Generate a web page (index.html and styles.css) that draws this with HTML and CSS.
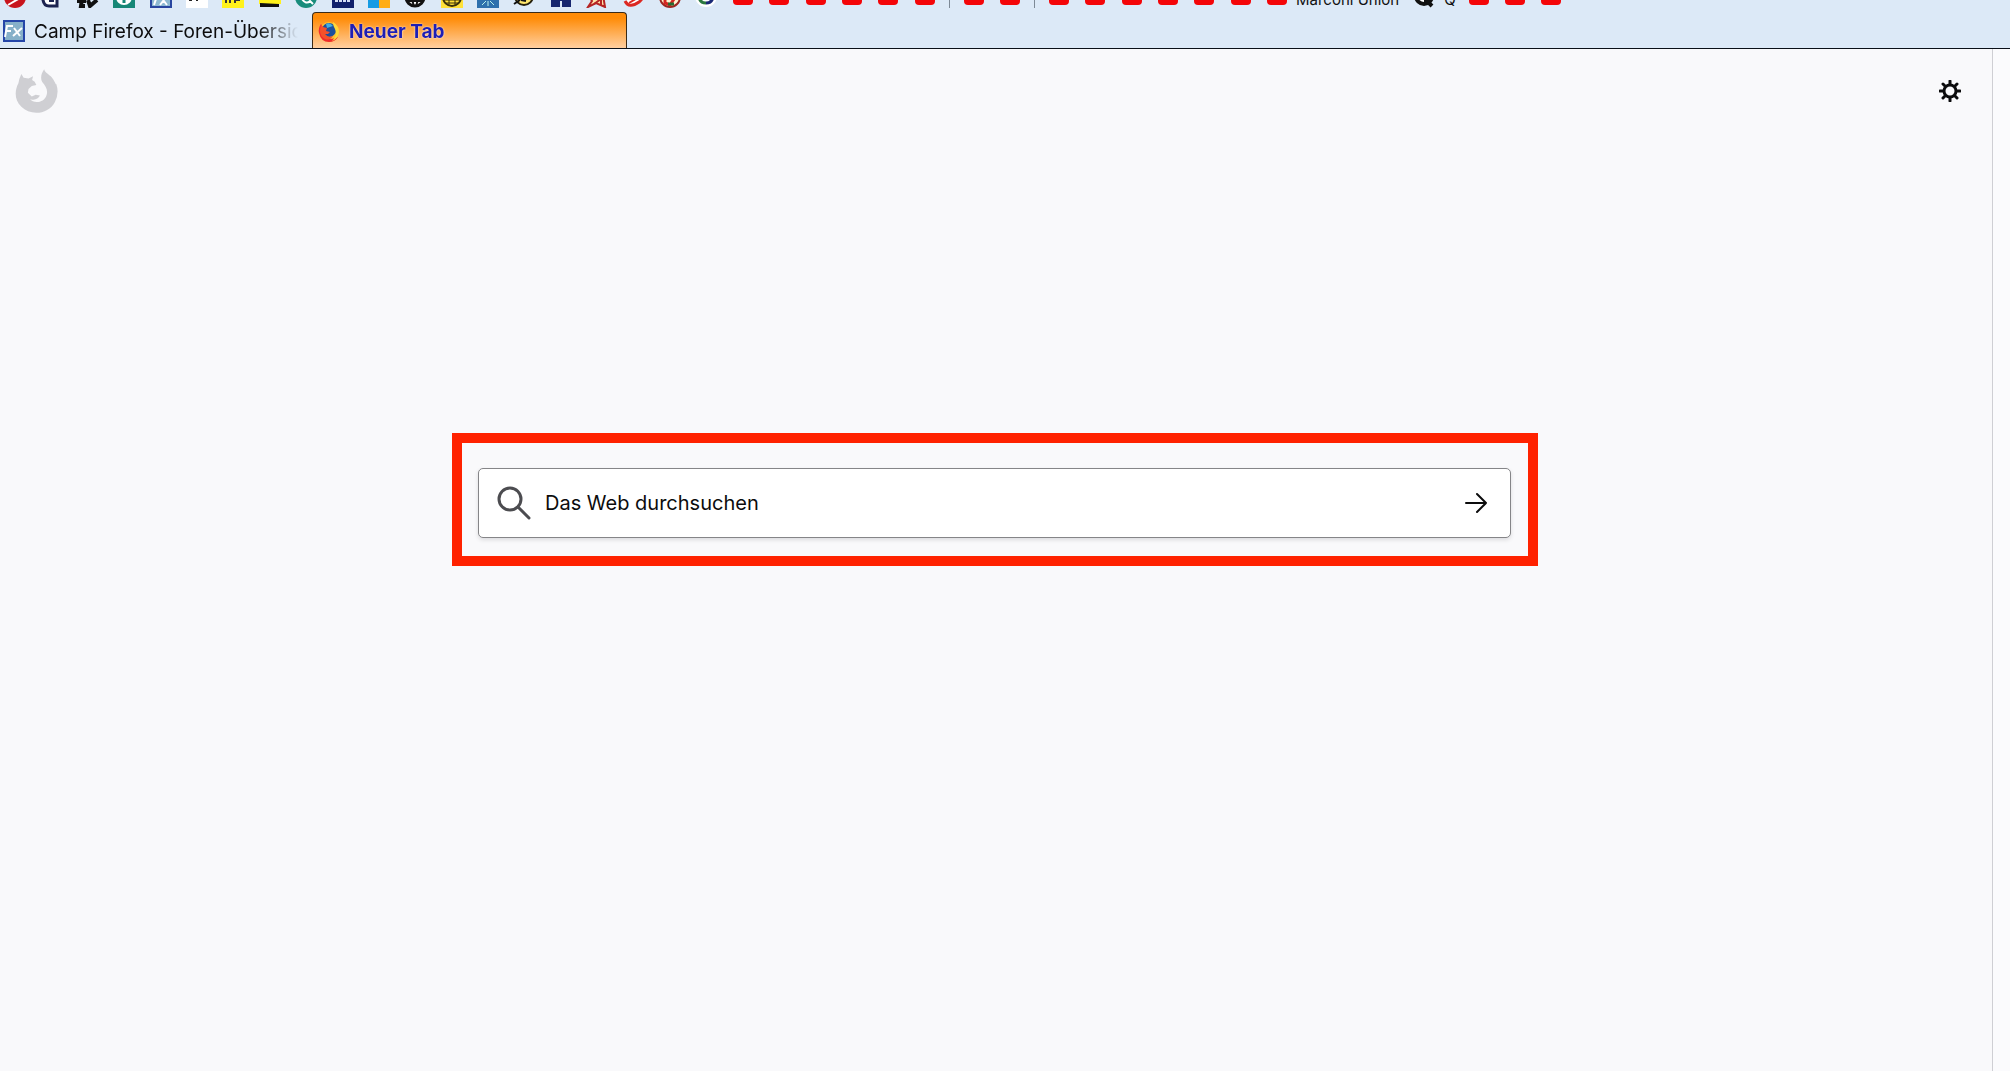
FILE: index.html
```
<!DOCTYPE html>
<html lang="de">

<head>
    <meta charset="utf-8">
    <title>Neuer Tab</title>
    <link rel="stylesheet" href="styles.css">
</head>

<body>
    <nav class="bookmarks" aria-label="Lesezeichen">
        <div class="group icons">
            <svg viewBox="0 0 22 22"><circle cx="11" cy="11" r="11" fill="#c8141c" /><path d="M4 19L16 12" stroke="#fff" stroke-width="2" /></svg>
            <svg viewBox="0 0 22 22"><path d="M3 8v6q1 6 6 6h8V8" fill="#fff" stroke="#1c2350" stroke-width="3" /><path d="M9 15h5" stroke="#1c2350" stroke-width="2" /></svg>
            <svg viewBox="0 0 22 22"><path d="M0 15h9M5 12l-1 8h4M11 14l2 6 7-6" fill="none" stroke="#111" stroke-width="4" /></svg>
            <svg viewBox="0 0 22 22"><path d="M0 0h22v22H0z" fill="#168777" /><circle cx="11" cy="11" r="8" fill="#fff" /><path d="M11 10v7" stroke="#168777" stroke-width="3" /></svg>
            <svg viewBox="0 0 22 22"><path d="M1 1h20v20H1z" fill="#8db9d2" stroke="#2846a0" stroke-width="2" /><path d="M4 19l3-9M10 10l7 9M17 10l-7 9" stroke="#fff" stroke-width="2" /></svg>
            <svg viewBox="0 0 22 22"><path d="M0 0h22v22H0z" fill="#fff" /><path d="M3 14h3M10 14h2" stroke="#222" stroke-width="2" /></svg>
            <svg viewBox="0 0 22 22"><path d="M0 0h22v22H0z" fill="#fff21c" /><path d="M4 10v7M8 10v7M13 10v7M13 14h5" stroke="#333" stroke-width="2" /></svg>
            <svg viewBox="0 0 22 22"><path d="M0 0h22v18H0z" fill="#fff21c" /><path d="M1 17l19 1v3H1z" fill="#111" /></svg>
            <svg viewBox="0 0 22 22"><circle cx="11" cy="11" r="11" fill="#188c7c" /><path d="M7 13q4 6 8 2l3 3" fill="none" stroke="#fff" stroke-width="2" /></svg>
            <svg viewBox="0 0 22 22"><path d="M0 0h22v22H0z" fill="#10206c" /><path d="M3 15h16" stroke="#d5def4" stroke-width="2" stroke-dasharray="3 1" /></svg>
            <svg viewBox="0 0 22 22"><path d="M0 0h11v22H0z" fill="#169be3" /><path d="M11 0h11v22H11z" fill="#ffad16" /></svg>
            <svg viewBox="0 0 22 22"><circle cx="11" cy="11" r="9" fill="#fff" stroke="#111" stroke-width="3" /><path d="M2 15h18M8 4q-1 8 2 16M14 4q1 8-2 16" fill="none" stroke="#111" stroke-width="2" /></svg>
            <svg viewBox="0 0 22 22"><path d="M0 0h22v22H0z" fill="#ffe139" /><circle cx="11" cy="11" r="9" fill="none" stroke="#39310b" stroke-width="2" /><path d="M3 14h16M5 17h12M8 8v12M14 8v12" stroke="#39310b" stroke-width="1" /></svg>
            <svg viewBox="0 0 22 22"><path d="M0 0h22v22H0z" fill="#2e70ad" /><path d="M11 15v5M9 15l-4 4M13 15l4 4" stroke="#b8f1eb" stroke-width="1" /></svg>
            <svg viewBox="0 0 22 22"><circle cx="11" cy="10" r="9" fill="#ffe66c" stroke="#25200c" stroke-width="2" /><path d="M1 18l6-4M8 14l5 1" stroke="#111" stroke-width="2" /></svg>
            <svg viewBox="0 0 22 22"><path d="M1 0h20v21H1z" fill="#17276f" /><path d="M11 15v7" stroke="#dce9f7" stroke-width="2" /></svg>
            <svg viewBox="0 0 22 22"><path d="M1 7l5 8-4 6 8-4 9 4-2-12" fill="#ffe3a8" stroke="#b52424" stroke-width="2" /><path d="M8 18l7-5v7" fill="none" stroke="#b52424" stroke-width="2" /></svg>
            <svg viewBox="0 0 22 22"><path d="M2 15q4 8 14 1 5-4 4-9" fill="#fff" stroke="#dc2822" stroke-width="3" /><path d="M6 17l10-6" stroke="#dc2822" stroke-width="2" /></svg>
            <svg viewBox="0 0 22 22"><circle cx="11" cy="11" r="10" fill="#fff2ce" stroke="#9b2720" stroke-width="2" /><path d="M6 10v7l5 2 4-6" fill="none" stroke="#d52620" stroke-width="3" /><path d="M9 18h6" stroke="#286c31" stroke-width="3" /></svg>
            <svg viewBox="0 0 22 22"><circle cx="11" cy="10" r="11" fill="#fff" /><path d="M4 11q1 6 7 6" fill="none" stroke="#2a7840" stroke-width="3" /><path d="M11 17q6 0 7-6" fill="none" stroke="#192875" stroke-width="3" /></svg>
            <svg viewBox="0 0 22 22"><use href="#video" /></svg>
            <svg viewBox="0 0 22 22"><use href="#video" /></svg>
            <svg viewBox="0 0 22 22"><use href="#video" /></svg>
            <svg viewBox="0 0 22 22"><use href="#video" /></svg>
            <svg viewBox="0 0 22 22"><use href="#video" /></svg>
            <svg viewBox="0 0 22 22"><use href="#video" /></svg>
        </div>
        <span class="separator"></span>
        <div class="group pair">
            <svg viewBox="0 0 22 22"><use href="#video" /></svg>
            <svg viewBox="0 0 22 22"><use href="#video" /></svg>
        </div>
        <span class="separator"></span>
        <div class="group videos">
            <svg viewBox="0 0 22 22"><use href="#video" /></svg>
            <svg viewBox="0 0 22 22"><use href="#video" /></svg>
            <svg viewBox="0 0 22 22"><use href="#video" /></svg>
            <svg viewBox="0 0 22 22"><use href="#video" /></svg>
            <svg viewBox="0 0 22 22"><use href="#video" /></svg>
            <svg viewBox="0 0 22 22"><use href="#video" /></svg>
            <svg viewBox="0 0 22 22"><use href="#video" /></svg>
        </div>
        <a class="bookmark" href="#">Marconi Union</a>
        <a class="bookmark q-link" href="#">
            <svg viewBox="0 0 22 22"><circle cx="11" cy="10" r="8" fill="#fff" stroke="#111" stroke-width="4" /><path d="M11 14h5M14 15l5 5" stroke="#111" stroke-width="4" /></svg>
            Q
        </a>
        <div class="group last">
            <svg viewBox="0 0 22 22"><use href="#video" /></svg>
            <svg viewBox="0 0 22 22"><use href="#video" /></svg>
            <svg viewBox="0 0 22 22"><use href="#video" /></svg>
        </div>
    </nav>

    <div class="tabs" role="tablist">
        <button class="tab" type="button" role="tab" aria-selected="false">
            <svg class="favicon" viewBox="0 0 22 22">
                <path d="M1 1h20v20H1z" fill="#86b0c9" stroke="#2445a8" stroke-width="2" />
                <path d="M2 17L4 6h6M3 11h5M11 8l6 8M19 8l-9 8" fill="none" stroke="#fff" stroke-width="2" />
            </svg>
            <span class="label">Camp Firefox - Foren-Übersicht</span>
        </button>
        <button class="tab active" type="button" role="tab" aria-selected="true">
            <svg class="favicon" viewBox="0 0 22 22">
                <circle cx="11" cy="11" r="10" fill="#ffc02e" />
                <path d="M3 3Q0 7 1 12q2 9 10 9 6 0 9-5-4 2-8 2L6 8z" fill="#f02a2c" />
                <circle cx="11" cy="9" r="7" fill="#1d4f9c" />
                <path d="M8 3q4-2 7 2l-3 1-3 1z" fill="#43aee0" />
                <path d="M3 3l2 3 4 1-1 3 4 1-2 2-3 0q3 4 8 2-3 5-8 3-5-3-5-8z" fill="#f4512a" />
                <path d="M15 1q6 4 6 10-1 7-7 9 6-6 3-12-2-3-2-7" fill="#ffd83a" />
            </svg>
            <span class="label">Neuer Tab</span>
        </button>
    </div>

    <main class="page">
        <header class="page-header">
            <svg class="logo" viewBox="45 85 130 135">
                <path d="M62 100L69 112 84 114 98 107 95 119 103 124 108 134 94 137 84 146 82 158 94 169 106 164 119 166Q113 178 99 179 91 180 88 176C100 193 132 188 139 166 145 149 136 137 126 125 119 112 124 97 132 86 135 99 151 102 160 117L166 128Q168 134 169 130 179 160 165 186C146 225 89 229 62 201 39 179 42 149 53 129Q55 114 62 100" />
            </svg>
            <button class="settings" type="button" aria-label="Einstellungen">
                <svg viewBox="-11 -11 22 22">
                    <circle r="6" />
                    <path d="M0-7v-3M0 7v3M-7 0h-3M7 0h3M-5-5l-2-2M5-5l2-2M-5 5l-2 2M5 5l2 2" />
                </svg>
            </button>
        </header>
        <div class="highlight">
            <form class="search">
                <svg class="glass" viewBox="0 0 34 34">
                    <circle cx="13" cy="13" r="11" />
                    <path d="M21 21l11 11" />
                </svg>
                <input type="text" placeholder="Das Web durchsuchen" aria-label="Das Web durchsuchen" autocomplete="off">
                <button class="go" type="submit" aria-label="Suchen">
                    <svg viewBox="0 0 24 24"><path d="M2 12h20M13 3l9 9-9 9" /></svg>
                </button>
            </form>
        </div>
    </main>

    <svg class="symbols" width="0" height="0" aria-hidden="true">
        <symbol id="video" viewBox="0 0 22 22"><rect x="1" y="3" width="20" height="16" rx="4" fill="#f40508" /></symbol>
    </svg>
</body>

</html>
```
FILE: styles.css
```
* {
    box-sizing: border-box;
}

body {
    margin: 0;
    min-height: 100vh;
    display: flex;
    flex-direction: column;
    background-color: #dce9f7;
    font-family: Inter, "Liberation Sans", sans-serif;
    color: #0c0c0d;
    overflow: hidden;
}

button {
    border: 0;
    padding: 0;
    background: none;
    font: inherit;
    color: inherit;
}

.symbols {
    position: absolute;
}

/* only the lower edge of the bookmarks bar is in view */
.bookmarks {
    display: flex;
    align-items: flex-end;
    height: 12px;
    padding: 0 4px 4px;
}

.group {
    display: flex;
    flex: none;
    justify-content: space-between;
}

.bookmarks svg {
    flex: none;
    width: 22px;
    height: 22px;
}

.icons {
    width: 932px;
}

.pair {
    width: 58px;
}

.videos {
    width: 240px;
}

.last {
    width: 94px;
    margin-left: 12px;
}

.separator {
    width: 1px;
    height: 22px;
    margin: 0 13px;
    background-color: #7d8996;
}

.bookmark {
    display: flex;
    margin-left: 8px;
    font-size: 15px;
    line-height: 16px;
    color: #111;
    text-decoration: none;
    white-space: nowrap;
}

.q-link {
    align-items: flex-end;
    gap: 9px;
    margin-left: 14px;
}

.tabs {
    display: flex;
    height: 37px;
    border-bottom: 1px solid #090f18;
}

.tab {
    display: flex;
    align-items: center;
    gap: 9px;
    width: 312px;
    padding: 2px 14px 0 3px;
    font-size: 19px;
    text-align: left;
}

.tab .label {
    flex: 1;
    overflow: hidden;
    white-space: nowrap;
    mask-image: linear-gradient(to right, #000 85%, transparent);
}

.favicon {
    flex: none;
    width: 22px;
    height: 22px;
}

.tab.active {
    width: 315px;
    padding-left: 5px;
    border: 1px solid #3b2a16;
    border-bottom: 0;
    border-radius: 4px 4px 0 0;
    background: linear-gradient(#ff8c08 15%, #ffcfa0);
    color: #1e1eb4;
    font-weight: bold;
    text-shadow: 0 0 2px #fff;
}

.page {
    flex: 1;
    margin-right: 17px;
    padding-right: 2px;
    border-right: 1px solid #cfcfd4;
    background-color: #f9f9fb;
    box-shadow: 17px 0 #fbfbfd;
}

.page-header {
    display: flex;
    justify-content: space-between;
    align-items: center;
    height: 84px;
    padding: 0 29px 0 15px;
}

.logo {
    width: 44px;
    height: 44px;
    fill: #cfcfd3;
}

.settings svg {
    display: block;
    width: 22px;
    height: 22px;
    fill: none;
    stroke: #0c0c0d;
    stroke-width: 3;
    stroke-linecap: round;
}

.highlight {
    width: 1086px;
    max-width: 90%;
    margin: 300px auto 0;
    padding: 25px 17px 18px 16px;
    border: 10px solid #ff2200;
}

.search {
    display: flex;
    align-items: center;
    height: 70px;
    padding: 0 22px 0 18px;
    border: 1px solid #858588;
    border-radius: 5px;
    background-color: #fff;
    box-shadow: 0 2px 4px rgba(12, 12, 13, 0.12);
}

.glass {
    flex: none;
    width: 34px;
    height: 34px;
    fill: none;
    stroke: #4c4c50;
    stroke-width: 3;
    stroke-linecap: round;
}

.search input {
    flex: 1;
    min-width: 0;
    padding: 0 14px;
    border: 0;
    outline: none;
    background: none;
    font: inherit;
    font-size: 20px;
}

.search input::placeholder {
    color: #0c0c0d;
    opacity: 1;
}

.go svg {
    display: block;
    width: 24px;
    height: 24px;
    fill: none;
    stroke: #0c0c0d;
    stroke-width: 2;
    stroke-linecap: round;
    stroke-linejoin: round;
}
```
